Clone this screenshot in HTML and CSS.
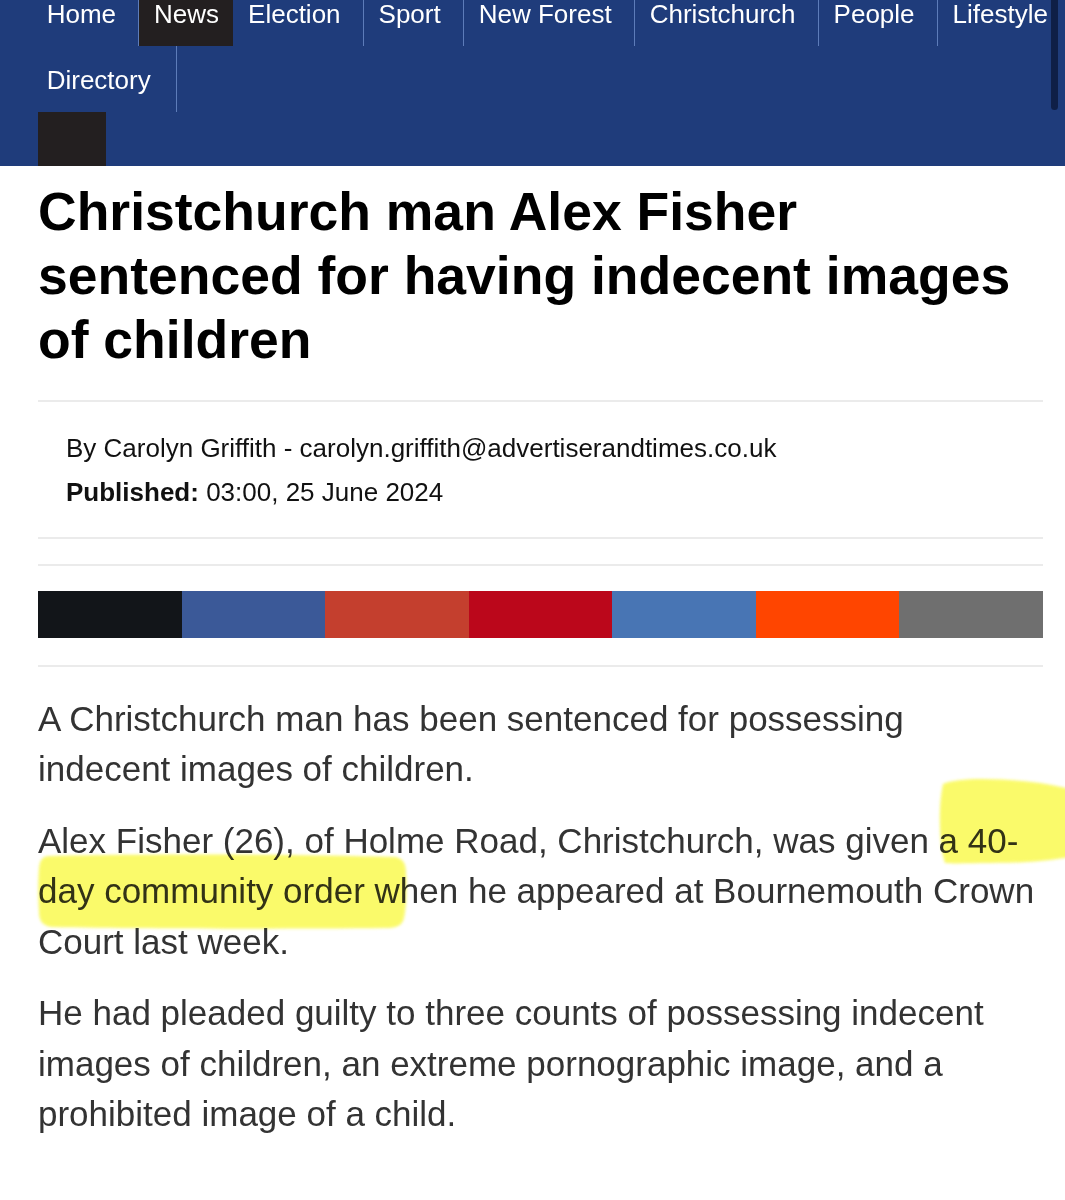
FILE: index.html
```html
<!DOCTYPE html>
<html lang="en">
<head>
<meta charset="utf-8">
<title>Christchurch man Alex Fisher sentenced for having indecent images of children</title>
<link rel="stylesheet" href="styles.css">
</head>
<body>
<div class="page">
  <header class="site-header">
    <nav class="nav">
      <ul class="nav-row nav-row--first">
        <li class="nav-item"><a class="nav-link" href="#">Home</a></li>
        <li class="nav-item nav-item--active"><a class="nav-link" href="#">News</a></li>
        <li class="nav-item"><a class="nav-link" href="#">Election</a></li>
        <li class="nav-item"><a class="nav-link" href="#">Sport</a></li>
        <li class="nav-item"><a class="nav-link" href="#">New Forest</a></li>
        <li class="nav-item"><a class="nav-link" href="#">Christchurch</a></li>
        <li class="nav-item"><a class="nav-link" href="#">People</a></li>
        <li class="nav-item"><a class="nav-link" href="#">Lifestyle</a></li>
      </ul>
      <ul class="nav-row nav-row--second">
        <li class="nav-item nav-item--wide"><a class="nav-link" href="#">Directory</a></li>
      </ul>
      <div class="nav-tools"><span class="nav-tool"></span></div>
    </nav>
    <div class="scroll-indicator"></div>
  </header>

  <main class="article">
    <h1 class="headline">Christchurch man Alex Fisher sentenced for having indecent images of children</h1>

    <div class="meta">
      <div class="meta-line">By Carolyn Griffith - <a class="meta-link" href="#">carolyn.griffith@advertiserandtimes.co.uk</a></div>
      <div class="meta-line"><strong>Published:</strong> 03:00, 25 June 2024</div>
    </div>

    <div class="share">
      <div class="share-bar">
        <span class="share-btn share-btn--x"></span>
        <span class="share-btn share-btn--fb"></span>
        <span class="share-btn share-btn--mail"></span>
        <span class="share-btn share-btn--pin"></span>
        <span class="share-btn share-btn--li"></span>
        <span class="share-btn share-btn--reddit"></span>
        <span class="share-btn share-btn--more"></span>
      </div>
    </div>

    <div class="article-body">
      <p>A Christchurch man has been sentenced for possessing indecent images of children.</p>
      <p>Alex Fisher (26), of Holme Road, Christchurch, was given a 40-day community order when he appeared at Bournemouth Crown Court last week.</p>
      <p>He had pleaded guilty to three counts of possessing indecent images of children, an extreme pornographic image, and a prohibited image of a child.</p>
    </div>
  </main>

  <svg class="highlights" width="1065" height="1200" viewBox="0 0 1065 1200" aria-hidden="true">
    <defs>
      <filter id="soft" x="-10%" y="-10%" width="120%" height="120%">
        <feGaussianBlur stdDeviation="1.8"/>
      </filter>
    </defs>
    <g filter="url(#soft)" fill="#f9f945" opacity="0.8">
      <path d="M943,784 C958,777 1000,778 1040,783 C1052,785 1062,787 1070,789 L1070,857 C1050,861 1020,863 990,863 C972,863 955,864 945,863 C939,846 938,806 943,784 Z"/>
      <path d="M50,856 C150,854 300,854 396,857 C404,859 406,865 406,873 C407,891 406,910 404,918 C402,926 396,928 386,928 C290,929 150,929 52,927 C42,926 39,920 39,912 C38,896 38,880 39,868 C40,859 43,856 50,856 Z"/>
    </g>
  </svg>
</div>
</body>
</html>
```

FILE: styles.css
```css
* {
  box-sizing: border-box;
}

html, body {
  margin: 0;
  padding: 0;
  background: #ffffff;
}

body {
  font-family: "Liberation Sans", Arial, Helvetica, sans-serif;
  color: #000;
}

.page {
  position: relative;
  width: 1065px;
  overflow: hidden;
}

/* ---------- header / nav ---------- */
.site-header {
  position: relative;
  background: #1f3c7b;
  overflow: hidden;
}

.nav-row {
  list-style: none;
  margin: 0;
  padding: 0 0 0 31.7px;
  display: flex;
  flex-wrap: nowrap;
}

.nav-item {
  flex: none;
  padding-right: 5px;
  border-right: 1px solid #5d7cb9;
}

.nav-item--active {
  padding-right: 0;
  border-right: none;
}

.nav-link {
  display: block;
  color: #ffffff;
  text-decoration: none;
  font-size: 26px;
  white-space: nowrap;
  padding: 0 17px 0 15px;
}

.nav-item--active .nav-link {
  background: #231f20;
  padding-right: 14px;
}

.nav-row--first .nav-link {
  line-height: 28px;
  padding-bottom: 18px;
}

.nav-row--second .nav-link {
  line-height: 63px;
  padding-top: 3px;
}

.nav-item--wide .nav-link {
  padding-right: 20px;
}

.nav-tools {
  height: 54px;
  padding-left: 38px;
  display: flex;
}

.nav-tool {
  display: block;
  width: 68px;
  height: 54px;
  background: #231f20;
}

.scroll-indicator {
  position: absolute;
  top: -4px;
  left: 1051px;
  width: 6.5px;
  height: 114px;
  border-radius: 4px;
  background: #0f1f47;
}

/* ---------- article ---------- */
.article {
  padding: 0 22px 0 38px;
}

.headline {
  margin: 14.4px 0 27.6px;
  font-size: 53.5px;
  line-height: 64px;
  font-weight: 700;
  color: #000;
}

.meta {
  border-top: 2px solid #ebebeb;
  border-bottom: 2px solid #ebebeb;
  padding: 24px 28px 23px;
  font-size: 26px;
  line-height: 44px;
  color: #111;
}

.meta-line {
  white-space: nowrap;
}

.meta-link {
  color: #111;
  text-decoration: none;
}

.share {
  margin-top: 25px;
  border-top: 2px solid #ebebeb;
  border-bottom: 2px solid #ebebeb;
  padding: 25px 0 27px;
}

.share-bar {
  display: grid;
  grid-template-columns: repeat(7, 1fr);
  height: 47px;
}

.share-btn {
  display: block;
}

.share-btn--x { background: #121519; }
.share-btn--fb { background: #3b5998; }
.share-btn--mail { background: #c43f2e; }
.share-btn--pin { background: #bb071b; }
.share-btn--li { background: #4875b4; }
.share-btn--reddit { background: #ff4500; }
.share-btn--more { background: #6f6f6f; }

.article-body {
  padding-top: 26.6px;
  color: #333333;
  font-size: 35px;
  line-height: 50.5px;
}

.article-body p {
  margin: 0 0 21px;
}

/* ---------- annotation overlay ---------- */
.highlights {
  position: absolute;
  top: 0;
  left: 0;
  pointer-events: none;
  mix-blend-mode: multiply;
}
```
